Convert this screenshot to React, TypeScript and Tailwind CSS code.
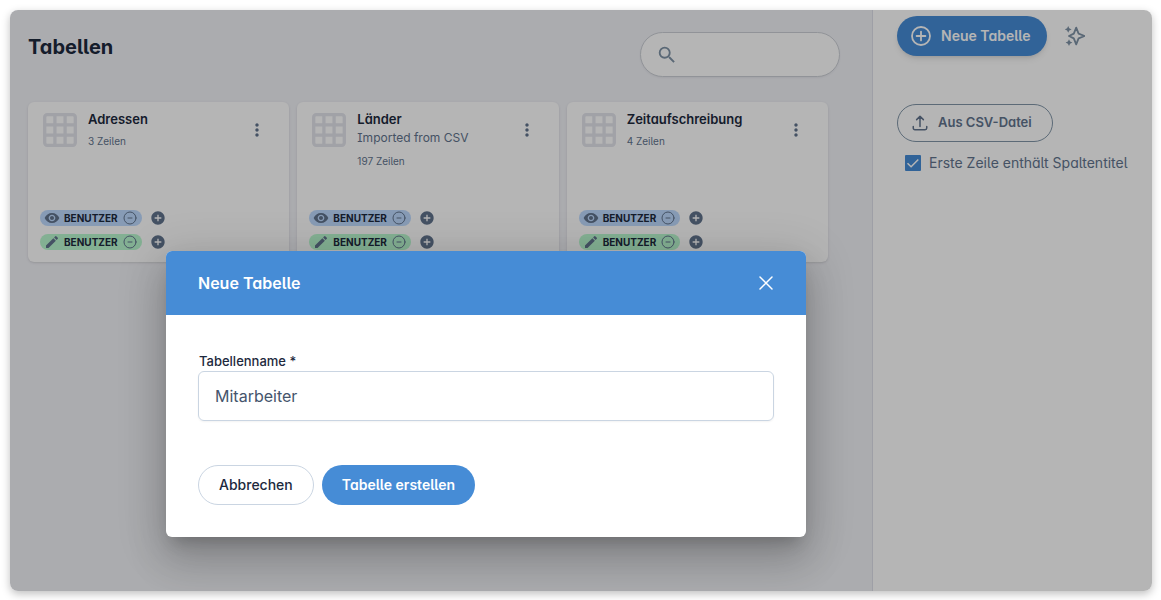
import { HiOutlineArrowUpTray, HiOutlineMinusCircle, HiOutlineXMark } from "react-icons/hi2";
import {
  MdAddCircle,
  MdEdit,
  MdMoreVert,
  MdRemoveRedEye,
  MdSearch,
} from "react-icons/md";

const tables = [
  { name: "Adressen", description: "", rows: 3 },
  { name: "Länder", description: "Imported from CSV", rows: 197 },
  { name: "Zeitaufschreibung", description: "", rows: 4 },
];

const permissions = [
  { label: "Lesen", color: "bg-blue-200", Icon: MdRemoveRedEye },
  { label: "Schreiben", color: "bg-green-200", Icon: MdEdit },
];

const TableIcon = () => (
  <svg
    viewBox="0 0 34 34"
    className="size-[34px] shrink-0 text-[#e3e4ec]"
    fill="none"
    stroke="currentColor"
    strokeWidth="3.3"
  >
    <rect x="1.7" y="1.7" width="30.6" height="30.6" rx="2.5" />
    <path d="M11.9 2v30M22.1 2v30M2 11.9h30M2 22.1h30" />
  </svg>
);

const PlusCircleIcon = () => (
  <svg
    viewBox="0 0 20 20"
    className="size-5"
    fill="none"
    stroke="currentColor"
    strokeWidth="1.8"
    strokeLinecap="round"
  >
    <circle cx="10" cy="10" r="9" />
    <path d="M10 5.6v8.8M5.6 10h8.8" />
  </svg>
);

const SparkleIcon = () => (
  <svg viewBox="0 0 20 20" className="size-5" fill="currentColor">
    <path
      d="M11.2 1.6l2.4 6 6 2.4-6 2.4-2.4 6-2.4-6-4.8-2.4 4.8-2.4z"
      fill="none"
      stroke="currentColor"
      strokeWidth="1.8"
      strokeLinejoin="round"
    />
    <path d="M3.2 0l1.1 2.3 2.3 1.1-2.3 1.1-1.1 2.3-1.1-2.3L-.2 3.4l2.3-1.1z" />
    <path d="M4 13.2l1.1 2.3 2.3 1.1-2.3 1.1L4 20l-1.1-2.3-2.3-1.1 2.3-1.1z" />
  </svg>
);

type TableCardProps = {
  name: string;
  description: string;
  rows: number;
};

const TableCard = ({ name, description, rows }: TableCardProps) => {
  return (
    <article className="flex h-40 flex-col justify-between rounded-md bg-white px-3 pt-2 pb-3 shadow-sm">
      <div className="flex items-start pl-[3px]">
        <div className="pt-[3px]">
          <TableIcon />
        </div>
        <div className="min-w-0 flex-1 pl-[11px]">
          <h2 className="text-[13px] leading-[18px] font-semibold text-slate-800">
            {name}
          </h2>
          {description && (
            <p className="text-xs leading-5 text-slate-500">{description}</p>
          )}
          <p className="mt-1 text-[10px] leading-[18px] text-slate-500">
            {rows} Zeilen
          </p>
        </div>
        <button
          aria-label={`Menü ${name}`}
          className="mt-2.5 mr-2.5 text-slate-500"
        >
          <MdMoreVert size={20} />
        </button>
      </div>

      {/* Permissions */}
      <div className="flex flex-col gap-2">
        {permissions.map(({ label, color, Icon }) => (
          <div key={label} className="flex items-center gap-2 text-slate-500">
            <span
              className={`flex h-4 items-center gap-1 rounded-full px-1 ${color}`}
            >
              <Icon size={16} />
              <span className="text-[10px] leading-4 font-bold text-slate-800">
                BENUTZER
              </span>
              <button aria-label={`${label} entfernen`}>
                <HiOutlineMinusCircle size={16} />
              </button>
            </span>
            <button aria-label={`${label} hinzufügen`}>
              <MdAddCircle size={16} />
            </button>
          </div>
        ))}
      </div>
    </article>
  );
};

const Sidebar = () => {
  return (
    <aside className="w-[280px] shrink-0 border-l border-[#dfe1ea] bg-white pt-1.5 pl-6">
      <div className="flex items-center gap-[18px]">
        <button className="flex h-10 items-center gap-2.5 rounded-full bg-[#468cd6] pr-4 pl-3.5 text-sm font-semibold text-white shadow-md">
          <PlusCircleIcon />
          Neue Tabelle
        </button>
        <button aria-label="Mit KI erstellen" className="text-[#7f93a6]">
          <SparkleIcon />
        </button>
      </div>
      <button className="mt-12 flex h-[38px] items-center gap-[9px] rounded-full border border-[#8296a8] pr-5 pl-[13px] text-[13px] font-semibold text-slate-500">
        <HiOutlineArrowUpTray size={18} strokeWidth={2} />
        Aus CSV-Datei
      </button>
      <label className="mt-[11px] ml-2 flex items-center gap-2 text-sm text-slate-500">
        <span className="grid size-4 place-items-center">
          <input
            type="checkbox"
            defaultChecked
            className="col-start-1 row-start-1 size-4 appearance-none rounded-[1px] bg-[#468cd6]"
          />
          <svg
            viewBox="0 0 16 16"
            className="pointer-events-none col-start-1 row-start-1 size-4 text-white"
            fill="none"
            stroke="currentColor"
            strokeWidth="1.5"
          >
            <path d="M2.5 8.2l3.6 3.6 7.2-7.4" />
          </svg>
        </span>
        Erste Zeile enthält Spaltentitel
      </label>
    </aside>
  );
};

const NewTableDialog = () => {
  return (
    <div
      role="dialog"
      aria-labelledby="dialog-title"
      className="w-full max-w-[640px] rounded-md bg-white shadow-[0_11px_15px_-7px_rgba(0,0,0,0.2),0_24px_38px_3px_rgba(0,0,0,0.14),0_9px_46px_8px_rgba(0,0,0,0.12)]"
    >
      <div className="flex h-16 items-center justify-between rounded-t-md bg-[#468cd6] pr-7 pl-8 text-white">
        <h2 id="dialog-title" className="text-base font-semibold">
          Neue Tabelle
        </h2>
        <button aria-label="Schließen">
          <HiOutlineXMark size={24} />
        </button>
      </div>

      <form className="px-8 pt-9 pb-8">
        <label
          htmlFor="table-name"
          className="ml-px block text-[13px] leading-5 font-medium text-slate-800 [font-feature-settings:normal]"
        >
          Tabellenname *
        </label>
        <input
          id="table-name"
          type="text"
          defaultValue="Mitarbeiter"
          className="h-[50px] w-full rounded-md border border-slate-300 px-4 text-base text-slate-600 shadow-xs outline-none [font-feature-settings:normal]"
        />
        <div className="mt-11 flex gap-2">
          <button
            type="button"
            className="h-10 rounded-full border border-slate-300 px-5 text-sm font-medium text-slate-800"
          >
            Abbrechen
          </button>
          <button
            type="button"
            className="h-10 rounded-full bg-[#468cd6] px-5 text-sm font-semibold text-white"
          >
            Tabelle erstellen
          </button>
        </div>
      </form>
    </div>
  );
};

const App = () => {
  return (
    <div className="flex min-h-screen bg-white pt-2.5 pr-[9px] pb-[9px] pl-2.5 font-['Inter',sans-serif] [font-feature-settings:'cv05','cv08','cv11']">
      <div className="relative flex w-full overflow-hidden rounded-lg shadow-[0_3px_8px_rgba(0,0,0,0.25)]">
        <main className="min-w-0 flex-1 bg-[#f1f2f7] pl-[18px]">
          <header className="flex items-start justify-between pt-[22px] pr-8">
            <h1 className="text-xl leading-[30px] font-bold text-slate-800">
              Tabellen
            </h1>
            <div className="flex h-[45px] w-[200px] items-center rounded-full border border-[#ccd0d6] bg-white px-[15px] shadow-xs">
              <MdSearch size={22} className="shrink-0 text-[#7f93a6]" />
              <input
                type="search"
                aria-label="Suchen"
                className="w-full min-w-0 bg-transparent px-2 text-sm outline-none"
              />
            </div>
          </header>

          {/* Card Grid */}
          <div className="mt-[25px] grid grid-cols-3 gap-2 pr-11">
            {tables.map((table) => (
              <TableCard key={table.name} {...table} />
            ))}
          </div>
        </main>
        <Sidebar />

        {/* Backdrop */}
        <div className="absolute inset-0 bg-black/29 pt-[241px] pl-[156px]">
          <NewTableDialog />
        </div>
      </div>
    </div>
  );
};

export default App;
